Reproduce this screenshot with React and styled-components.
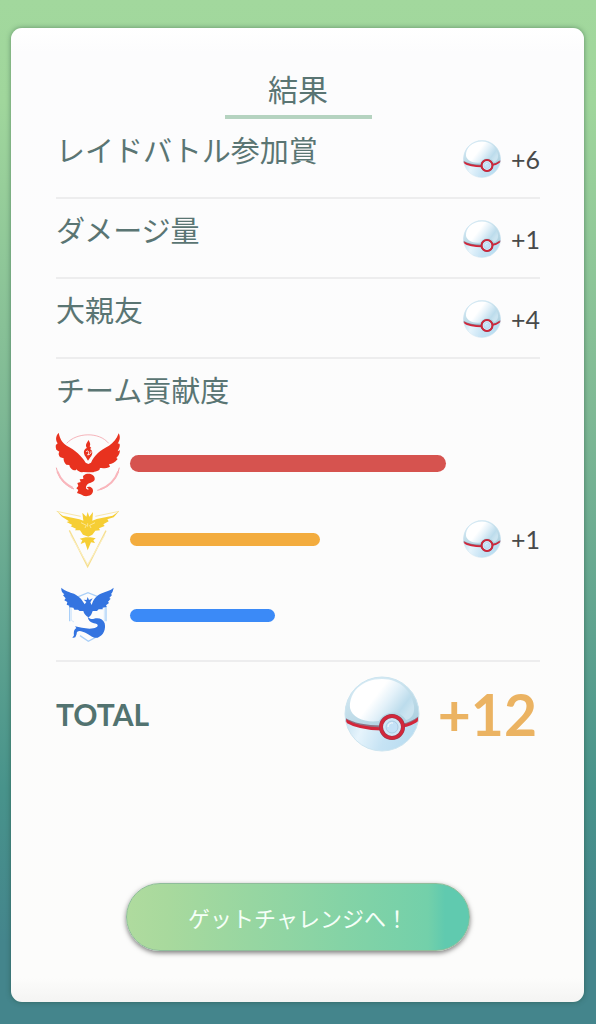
import React, { useId } from 'react';
import styled, { createGlobalStyle } from 'styled-components';

const rewards = [
    { label: 'レイドバトル参加賞', count: 6 },
    { label: 'ダメージ量', count: 1 },
    { label: '大親友', count: 4 },
];

const teams = [
    { name: 'Valor', Logo: ValorLogo, color: '#d6534f', share: 100, lead: true },
    { name: 'Instinct', Logo: InstinctLogo, color: '#f3ac3e', share: 60, count: 1 },
    { name: 'Mystic', Logo: MysticLogo, color: '#3b8af7', share: 46 },
];

export default function App() {
    return (
        <>
        <GlobalStyle />
        <Page>
            <Card>
                <Title>結果</Title>
                {rewards.map(({label, count}) => (
                    <Row key={label}>
                        <Label>{label}</Label>
                        <Reward count={count} />
                    </Row>
                ))}
                <Teams>
                    <Label>チーム貢献度</Label>
                    {teams.map(({name, Logo, color, share, lead, count}) => (
                        <TeamRow key={name}>
                            <LogoSpace><Logo /></LogoSpace>
                            <Track>
                                <Bar $color={color} $lead={lead} style={{width: `${share}%`}} />
                            </Track>
                            <RewardSpace>{count && <Reward count={count} />}</RewardSpace>
                        </TeamRow>
                    ))}
                </Teams>
                <TotalRow>
                    <TotalLabel>TOTAL</TotalLabel>
                    <Ball size={76} />
                    <TotalCount>+12</TotalCount>
                </TotalRow>
                <NextButton type="button">ゲットチャレンジへ！</NextButton>
            </Card>
        </Page>
        </>
    )
}

function Reward({count}) {
    return (
        <RewardGroup>
            <Ball size={38} />
            <Count>+{count}</Count>
        </RewardGroup>
    )
}

function Ball({size}) {
    const id = useId();
    return (
        <svg width={size} height={size} viewBox="0 0 76 76" aria-hidden="true">
            <defs>
                <linearGradient id={`${id}top`} x1="0.2" y1="0" x2="0.8" y2="1">
                    <stop offset="0" stopColor="#dceef7" />
                    <stop offset="0.5" stopColor="#c3deea" />
                    <stop offset="1" stopColor="#acd0e0" />
                </linearGradient>
                <linearGradient id={`${id}low`} x1="0" y1="0.4" x2="1" y2="0.8">
                    <stop offset="0" stopColor="#bbdbec" />
                    <stop offset="0.3" stopColor="#e6f4fc" />
                    <stop offset="0.6" stopColor="#c6e3f4" />
                    <stop offset="1" stopColor="#b6dbf0" />
                </linearGradient>
                <linearGradient id={`${id}shine`} x1="0.15" y1="0.3" x2="0.95" y2="0.7">
                    <stop offset="0.3" stopColor="#ffffff" />
                    <stop offset="0.55" stopColor="#e3f1f9" />
                    <stop offset="0.85" stopColor="#bcdcec" />
                    <stop offset="1" stopColor="#cbe4f0" />
                </linearGradient>
                <clipPath id={`${id}clip`}><circle cx="38" cy="38" r="37" /></clipPath>
            </defs>
            <g clipPath={`url(#${id}clip)`}>
                <rect width="76" height="76" fill={`url(#${id}low)`} />
                <path d="M0 0H76V43C62 52 22 54 0 45Z" fill={`url(#${id}top)`} />
                <path d="M6 32C5 16 18 3 38 3C57 3 68 16 70 30C71 38 67 43 62 44C56 34 41 34 35 45C22 47 8 42 6 32Z" fill={`url(#${id}shine)`} />
                <path d="M0 43C11 50 25 51 38 51M58 49C65 48 71 45 76 41" fill="none" stroke="#8d7384" strokeWidth="3" />
                <path d="M0 44C11 51 25 53 38 53M58 50C65 49 71 46 76 42" fill="none" stroke="#d3263a" strokeWidth="3" />
            </g>
            <circle cx="38" cy="38" r="37" fill="none" stroke="#cde5f0" strokeWidth="1" />
            <circle cx="48" cy="51" r="11" fill="#d0e7f7" stroke="#96394b" strokeWidth="4" />
            <circle cx="48" cy="51" r="11" fill="none" stroke="#d3263a" strokeWidth="3" />
            <circle cx="48" cy="51" r="6" fill="#c4e1f7" stroke="#abcde4" strokeWidth="1" />
            <path d="M44 51a4 4 0 0 1 5-4" fill="none" stroke="#ffffff" strokeWidth="1" />
        </svg>
    )
}

function ValorLogo() {
    return (
        <svg width="64" height="76" viewBox="48 15 192 228" overflow="visible" role="img" aria-label="Valor">
            <g fill="none" stroke="#f4a3aa" strokeWidth="3">
                <path d="M80 70C110 37 178 35 206 70" opacity="0.8" />
                <path d="M49 143C56 176 75 196 102 207" />
                <path d="M238 143C231 176 208 204 172 211" />
                <path d="M52 154C63 182 78 193 98 204M235 154C224 184 204 200 180 208" stroke="#f9b6bc" strokeWidth="6" />
            </g>
            <g fill="#e8321f">
                <path d="M56 38C60 60 70 70 80 77C106 91 124 106 137 128L145 132L153 128C163 105 181 90 207 77C220 69 230 57 236 40C243 52 238 64 233 71C240 69 241 75 238 83L233 94L240 91C239 103 234 109 229 114L233 117C225 128 217 131 207 133L210 140C200 145 190 145 180 144L178 150C168 155 164 154 160 157L145 157L129 156C121 158 115 154 109 148L107 151C98 152 90 145 88 135L79 134C73 129 70 121 71 115L61 112C54 104 56 98 58 95L49 89C46 80 47 73 50 73L53 70C45 58 48 47 56 38Z" />
                <path d="M146 60C137 73 136 77 141 84C130 88 129 100 137 110L144 122L151 112C159 103 159 92 150 87L154 84L149 79C153 72 149 68 146 60Z" />
                <path d="M136 163C152 158 166 166 164 179C160 189 148 186 141 194C135 202 138 210 147 208L140 202C148 197 160 202 159 213C158 226 144 230 132 228L122 223L111 219L115 210L109 205L115 198L112 189L122 186L119 178L130 177L129 168Z" />
            </g>
            <path d="M138 96C144 88 150 97 143 105C152 103 154 98 153 94" fill="none" stroke="#fcfcfd" strokeWidth="3" />
        </svg>
    )
}

function InstinctLogo() {
    return (
        <svg width="64" height="76" viewBox="48 3 192 228" overflow="visible" role="img" aria-label="Instinct">
            <g fill="none" stroke="#f8e7ab" strokeWidth="3">
                <path d="M50 34L122 49M237 34L166 49" />
                <path d="M88 91L143 200L198 92" stroke="#f6df91" strokeWidth="4" />
                <path d="M92 106L143 193L194 106" stroke="#fbefc3" />
            </g>
            <g fill="#f6ce34">
                <path d="M51 34L68 47L118 58L130 62L127 38L139 50L143 36L148 50L159 36L157 62L170 57L218 47L237 34L221 52L202 58L206 64L190 73L194 78L177 85L180 91L166 92L157 104L145 110L129 104L120 91L105 91L108 86L92 79L97 75L80 66L87 64L66 50Z" />
                <path d="M137 112L151 112L167 115L160 121L165 129L153 127L143 151L135 127L122 132L127 121L119 116Z" />
            </g>
            <path d="M123 68L139 76L135 84M165 68L149 76L153 84M143 70V80" fill="none" stroke="#fff3c4" strokeWidth="2" />
        </svg>
    )
}

function MysticLogo() {
    return (
        <svg width="64" height="76" viewBox="48 6 192 228" overflow="visible" role="img" aria-label="Mystic">
            <g fill="none" stroke="#a9cff8" strokeWidth="4">
                <path d="M108 68L144 53L181 68M89 92V139M198 92V139M120 182L145 199L172 184" />
                <path d="M94 100V136L102 141M193 100V139" stroke="#d4e7fb" strokeWidth="3" />
            </g>
            <g fill="#3474e0">
                <path d="M64 38C76 49 88 51 102 56C120 65 128 77 134 88L139 81L131 74L140 75L143 66L147 75L158 70L151 82L155 90C159 74 170 61 182 56C198 49 211 47 221 38C219 48 217 53 213 57L216 60L208 69L212 71L204 80L207 84L198 91L200 96L188 98L188 103L176 103L171 108L158 108C155 116 153 123 145 127C137 122 132 116 130 108L119 108L114 104L103 104L100 98L88 97L88 92L80 89L82 81L73 76L77 70L69 61L73 58C66 52 63 47 64 38Z" />
                <path d="M143 125C149 131 155 134 162 131C176 127 190 132 194 145C198 162 191 182 173 188C156 190 148 176 128 170C117 166 109 169 110 177L106 187L97 189L102 181C101 173 101 164 109 159L105 154C121 158 143 163 160 160C172 158 177 151 170 147C159 142 147 145 143 125Z" />
            </g>
        </svg>
    )
}

const GlobalStyle = createGlobalStyle`
    * { box-sizing: border-box; }
    body {
        margin: 0;
        font-family: Lato, "Noto Sans CJK JP", sans-serif;
        color: #5a7573;
    }
`;

const Page = styled.main`
    display: flex;
    min-height: 100vh;
    padding: 28px 12px 22px 11px;
    background: linear-gradient(#a2d89d 0%, #a0d69c 10%, #7fb995 40%, #48938b 77%, #44858c 92%, #44858c 100%);
`;

const Card = styled.section`
    display: flex;
    flex-direction: column;
    flex: 1;
    padding: 40px 44px 51px 45px;
    border-radius: 11px;
    background: linear-gradient(#ffffff 0, #fcfcfd 24px, #fcfcfb calc(100% - 24px), #f4f4f3 100%);
    box-shadow: 0 0 5px rgba(30, 70, 50, 0.5);
`;

const Title = styled.h1`
    align-self: center;
    width: 147px;
    height: 51px;
    margin: 0;
    border-bottom: 4px solid #b5d3c0;
    font-size: 30px;
    font-weight: 400;
    line-height: 42px;
    text-align: center;
`;

const Row = styled.div`
    display: flex;
    justify-content: space-between;
    height: 80px;
    padding-top: 10px;
    border-bottom: 2px solid #ededee;
`;

const Label = styled.h2`
    margin: 0;
    font-size: 29px;
    font-weight: 400;
    line-height: 44px;
`;

const RewardGroup = styled.div`
    display: flex;
    align-items: center;
    gap: 10px;
    height: 60px;
`;

const Count = styled.span`
    font-size: 25px;
    line-height: 32px;
    color: #484a4a;
`;

const Teams = styled.div`
    padding: 10px 0 7px;
    border-bottom: 2px solid #ededee;
`;

const TeamRow = styled.div`
    display: flex;
    align-items: center;
    height: 76px;
    &:first-of-type { margin-top: 12px; }
`;

const LogoSpace = styled.div`
    display: flex;
    width: 74px;
`;

const Track = styled.div`flex: 1;`;

const Bar = styled.div`
    height: ${props => props.$lead ? '17px' : '13px'};
    border-radius: 9px;
    background: ${props => props.$color};
`;

const RewardSpace = styled.div`
    display: flex;
    justify-content: flex-end;
    width: 94px;
`;

const TotalRow = styled.div`
    display: flex;
    align-items: center;
    height: 104px;
    padding-right: 3px;
`;

const TotalLabel = styled.h2`
    flex: 1;
    margin: 0;
    font-size: 30px;
    font-weight: 700;
    color: #527370;
`;

const TotalCount = styled.strong`
    margin-left: 18px;
    font-size: 57px;
    line-height: 64px;
    color: #ebb362;
`;

const NextButton = styled.button`
    align-self: center;
    width: 344px;
    height: 68px;
    margin-top: auto;
    border: 1px solid #8fbd9a;
    border-radius: 34px;
    background: linear-gradient(90deg, #afdb9e 0%, #a8d99d 12%, #73d0aa 88%, #60caaf 93%, #60caaf 100%);
    box-shadow: 0 2px 5px rgba(0, 0, 0, 0.5);
    font-family: inherit;
    font-size: 22px;
    color: #f5fff8;
    cursor: pointer;
`;
